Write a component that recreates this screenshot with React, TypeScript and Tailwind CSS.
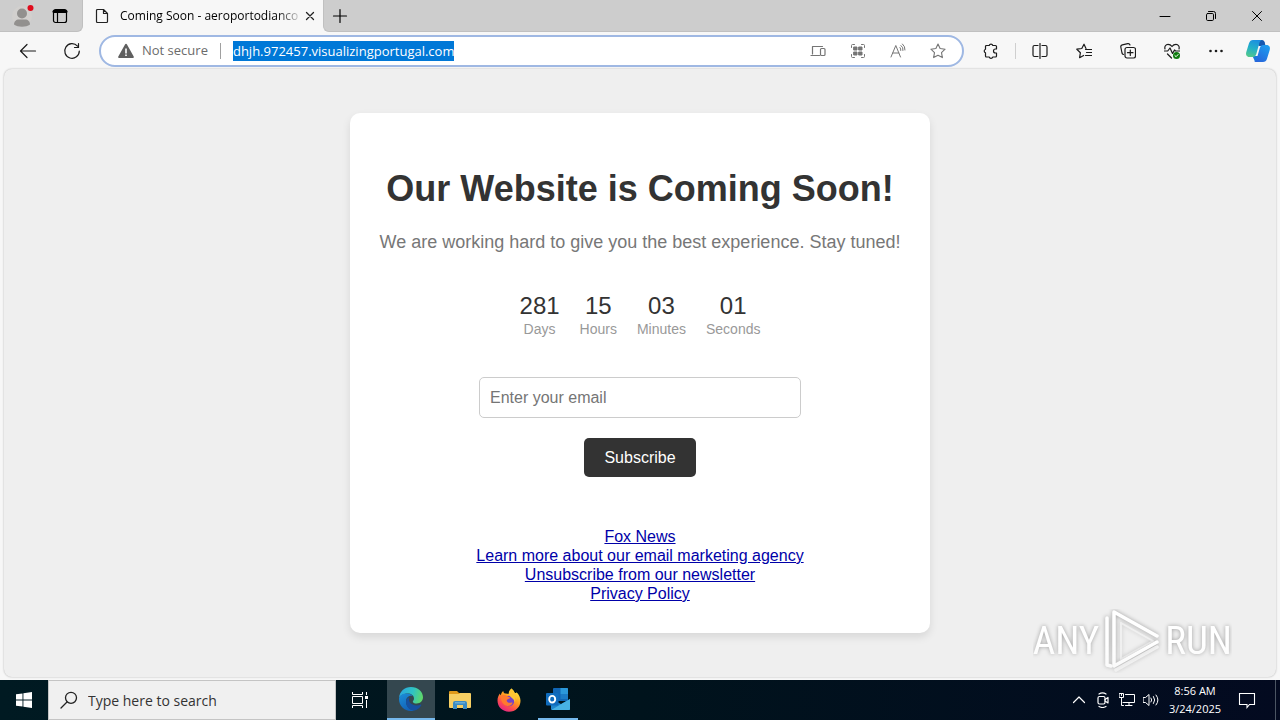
import type { ReactNode } from "react";

type IconProps = { size?: number; className?: string; children: ReactNode };

function Line({ size = 16, className = "", children }: IconProps) {
  return (
    <svg
      aria-hidden="true"
      width={size}
      height={size}
      viewBox={`0 0 ${size} ${size}`}
      fill="none"
      stroke="currentColor"
      strokeLinecap="round"
      strokeLinejoin="round"
      className={`shrink-0 ${className}`}
    >
      {children}
    </svg>
  );
}

function IconButton({ label, className, children }: { label: string; className: string; children: ReactNode }) {
  return (
    <button type="button" aria-label={label} className={`flex shrink-0 items-center justify-center ${className}`}>
      {children}
    </button>
  );
}

function TitleBar() {
  return (
    <div className="flex h-8 shrink-0 bg-[#f7f7f7]">
      <div className="flex w-[83px] shrink-0 items-center rounded-br-md border-r border-b border-[#c0c0c0] bg-[#cdcdcd]">
        <IconButton label="Profile" className="h-full w-11">
          <svg aria-hidden="true" width="24" height="24" viewBox="0 0 24 24">
            <circle cx="12" cy="12" r="10" fill="#d2d0ce" />
            <circle cx="12" cy="9.500" r="5" fill="#92908e" />
            <path d="M4 20.500c0-3 2-5 5-5h6c3 0 5 2 5 5-2 1.500-5 2.200-8 2.200s-6-.7-8-2.200z" fill="#92908e" />
            <circle cx="20.500" cy="4" r="3" fill="#e00b1c" />
          </svg>
        </IconButton>
        <IconButton label="Workspaces" className="h-full w-8 text-black">
          <Line>
            <rect x="1.500" y="1.500" width="13" height="13" rx="2" strokeWidth="1.200" />
            <path d="M2 3.500h12" strokeWidth="3" />
            <path d="M5.500 4v10" strokeWidth="1.200" />
          </Line>
        </IconButton>
      </div>
      <div className="flex w-60 shrink-0 items-center pl-[11px]">
        <Line className="text-[#222]">
          <path d="M2.500 2.500a1 1 0 0 1 1-1h6l4 4v8a1 1 0 0 1-1 1h-9a1 1 0 0 1-1-1zM9.500 1.500v4h4" strokeWidth="1.200" />
        </Line>
        <span className="ml-2.5 shrink-0 text-xs whitespace-nowrap text-black [mask-image:linear-gradient(to_right,black_88%,rgba(0,0,0,0.2))]">
          Coming Soon - aeroportodianco
        </span>
        <IconButton label="Close tab" className="mr-1 ml-auto h-6 w-6 text-[#222]">
          <Line size={10}>
            <path d="M1.500 1.500l7 7M8.500 1.500l-7 7" strokeWidth="1.300" />
          </Line>
        </IconButton>
      </div>
      <div className="flex flex-1 rounded-bl-md border-b border-l border-[#c0c0c0] bg-[#cdcdcd] text-black">
        <IconButton label="New tab" className="h-full w-8">
          <Line>
            <path d="M8 1.500v13M1.500 8h13" strokeWidth="1.200" />
          </Line>
        </IconButton>
        <div className="ml-auto flex">
          <IconButton label="Minimize" className="w-[46px]">
            <Line size={12}>
              <path d="M1 6.500h10" />
            </Line>
          </IconButton>
          <IconButton label="Restore" className="w-[46px]">
            <Line size={12}>
              <rect x="1.500" y="3.500" width="7" height="7" rx="1.200" />
              <path d="M3.500 1.500h5a2 2 0 0 1 2 2v5" />
            </Line>
          </IconButton>
          <IconButton label="Close" className="w-[46px]">
            <Line size={12}>
              <path d="M1.500 1.500l9 9M10.500 1.500l-9 9" />
            </Line>
          </IconButton>
        </div>
      </div>
    </div>
  );
}

function CopilotLogo() {
  return (
    <svg aria-hidden="true" width="26" height="26" viewBox="0 0 26 26">
      <defs>
        <linearGradient id="copilotLeft" x1="0.600" y1="0" x2="0.300" y2="1">
          <stop offset="0" stopColor="#1b8fe0" />
          <stop offset="0.500" stopColor="#22b0c8" />
          <stop offset="1" stopColor="#52c88c" />
        </linearGradient>
        <linearGradient id="copilotRight" x1="0.800" y1="0" x2="0.200" y2="1">
          <stop offset="0" stopColor="#1c9df0" />
          <stop offset="1" stopColor="#2864da" />
        </linearGradient>
      </defs>
      <path d="M13 2h4c1.500 0 2.300 1 2.700 2.300L20.500 8h-7z" fill="#1558b0" />
      <path d="M7.500 18h6l-1.500 6h-.5c-1.300 0-2-1-2.200-2z" fill="#1a78dc" />
      <path d="M8 2h9c-1.500.5-2.200 1.700-2.700 3.300L11.300 16c-.6 2-1.700 3-3.500 3H4.500C1.500 19 .5 16.500 1.300 14L4 5.300C4.700 3.200 6 2 8 2z" fill="url(#copilotLeft)" />
      <path d="M18 24H9c1.500-.5 2.200-1.700 2.700-3.300L14.800 10c.6-2 1.700-3 3.500-3h3.200c3 0 4 2.500 3.200 5L22 20.700c-.7 2.100-2 3.300-4 3.300z" fill="url(#copilotRight)" />
    </svg>
  );
}

function Toolbar() {
  return (
    <div className="flex h-[37px] shrink-0 items-center bg-[#f7f7f7] pl-1.5 text-[#1b1b1b]">
      <IconButton label="Back" className="h-8 w-11">
        <Line size={18}>
          <path d="M1.500 9h15M8 2.500L1.500 9 8 15.500" strokeWidth="1.200" />
        </Line>
      </IconButton>
      <IconButton label="Refresh" className="h-8 w-11">
        <Line size={18}>
          <path d="M14.500 4.200A7.300 7.300 0 1 0 16.300 9M15.500 1.500v4h-4" strokeWidth="1.200" />
        </Line>
      </IconButton>
      <div className="ml-[5px] flex h-8 min-w-0 flex-1 items-center rounded-full border-2 border-[#9fb8e3] bg-white pr-1 pl-[17px] text-[13px] text-[#6b6b6b]">
        <svg aria-hidden="true" width="16" height="16" viewBox="0 0 16 16" className="shrink-0">
          <path d="M7 1.400c.4-.8 1.600-.8 2 0l6.700 12c.4.800-.1 1.600-1 1.600H1.300c-.9 0-1.400-.8-1-1.600z" fill="#5f5f5f" />
          <path d="M7.200 5.500h1.600v5H7.200zM7.200 11.500h1.600v1.600H7.200z" fill="#fff" />
        </svg>
        <span className="ml-2 shrink-0">Not secure</span>
        <span className="mx-3 h-4 w-px shrink-0 bg-[#a0a0a0]" />
        <input
          aria-label="Address"
          readOnly
          value="dhjh.972457.visualizingportugal.com"
          className="h-5 [field-sizing:content] bg-[#0078d7] text-[13px] text-white outline-none"
        />
        <div className="ml-auto flex text-[#757575]">
          <IconButton label="Send to devices" className="h-7 w-10">
            <Line>
              <path d="M2.500 11V3.500h10M1 12.500h8.500" strokeWidth="1.200" />
              <rect x="10.500" y="5.500" width="4.500" height="7" rx="1" strokeWidth="1.200" />
            </Line>
          </IconButton>
          <IconButton label="QR code" className="h-7 w-10">
            <Line>
              <path d="M1.500 4.500v-2a1 1 0 0 1 1-1h2M11.500 1.500h2a1 1 0 0 1 1 1v2M14.500 11.500v2a1 1 0 0 1-1 1h-2M4.500 14.500h-2a1 1 0 0 1-1-1v-2" />
              <path d="M4 4h3v3H4zM9 4h3v3H9zM4 9h3v3H4zM9 9h3v3H9z" fill="currentColor" />
            </Line>
          </IconButton>
          <IconButton label="Read aloud" className="h-7 w-10">
            <Line>
              <path d="M1 14L5.800 2.500 10.500 14M2.800 10h6M10 4.500a4 4 0 0 1 .8 3M11 2.500a5 5 0 0 1 2 5M12.500 1a7 7 0 0 1 2.500 6" />
            </Line>
          </IconButton>
          <IconButton label="Add to favorites" className="h-7 w-10">
            <Line>
              <path d="M8 1l2.100 4.500 5 .7-3.600 3.400.9 5L8 12.200l-4.400 2.400.9-5L.9 6.200l5-.7z" strokeWidth="1.100" />
            </Line>
          </IconButton>
        </div>
      </div>
      <IconButton label="Extensions" className="ml-[5px] h-8 w-11">
        <Line>
          <path d="M3.500 2.500h2.700a1.900 1.900 0 0 1 3.600 0h2.700a1 1 0 0 1 1 1V6h-1a2 2 0 0 0 0 4h1v3a1 1 0 0 1-1 1H9.800a1.900 1.900 0 0 1-3.600 0H3.500a1 1 0 0 1-1-1v-3.200a1.900 1.900 0 0 1 0-3.600V3.500a1 1 0 0 1 1-1z" strokeWidth="1.200" />
        </Line>
      </IconButton>
      <span className="mx-0.5 h-4 w-px shrink-0 bg-[#cfcfcf]" />
      <IconButton label="Split screen" className="h-8 w-11">
        <Line>
          <path d="M6 2.500H2.500a1.500 1.500 0 0 0-1.500 1.500v8a1.500 1.500 0 0 0 1.500 1.500H6M10 2.500h3.500A1.500 1.500 0 0 1 15 4v8a1.500 1.500 0 0 1-1.500 1.500H10M8 .5v15" strokeWidth="1.200" />
        </Line>
      </IconButton>
      <IconButton label="Favorites" className="h-8 w-11">
        <Line>
          <path d="M10 5.500L8 1.200 5.800 5.500.8 6.200l3.600 3.500-.8 5 4-2.200M9.500 6.500h6M10.500 9.500h5M9.500 12.500h6" strokeWidth="1.200" />
        </Line>
      </IconButton>
      <IconButton label="Collections" className="h-8 w-11">
        <Line>
          <path d="M3.500 11.500A2 2 0 0 1 2 10L.8 4A2 2 0 0 1 2.300 1.800l5.500-1.100A2 2 0 0 1 10 2" strokeWidth="1.200" />
          <rect x="5" y="4.500" width="10.500" height="10.500" rx="2" strokeWidth="1.200" />
          <path d="M10.300 7v5.500M7.500 9.700H13" strokeWidth="1.200" />
        </Line>
      </IconButton>
      <IconButton label="Browser essentials" className="h-8 w-11">
        <Line>
          <path d="M1 6C.3 3.500 1.800 1.300 4 1.300c1.700 0 3 .8 4 2.200 1-1.400 2.300-2.200 4-2.200 2.200 0 3.700 2.200 3 4.700M.5 8h3.200L6 5l2.500 5.500L10.500 7l1 1h4M3.500 11L7.500 15" strokeWidth="1.200" />
          <circle cx="12.500" cy="12.500" r="3.500" fill="#0f7b0f" stroke="none" />
          <path d="M10.900 12.600l1.200 1.100 2-2.200" stroke="#fff" />
        </Line>
      </IconButton>
      <IconButton label="Settings and more" className="h-8 w-11">
        <Line>
          <g fill="currentColor" stroke="none">
            <circle cx="2.500" cy="8" r="1.300" />
            <circle cx="8" cy="8" r="1.300" />
            <circle cx="13.500" cy="8" r="1.300" />
          </g>
        </Line>
      </IconButton>
      <IconButton label="Copilot" className="h-8 w-[42px] pr-0.5">
        <CopilotLogo />
      </IconButton>
    </div>
  );
}

const countdown = [
  { value: "281", label: "Days" },
  { value: "15", label: "Hours" },
  { value: "03", label: "Minutes" },
  { value: "01", label: "Seconds" },
];

const links = ["Fox News", "Learn more about our email marketing agency", "Unsubscribe from our newsletter", "Privacy Policy"];

function Watermark() {
  return (
    <div
      aria-hidden="true"
      className="absolute right-11 bottom-1 flex items-center gap-1 font-['Liberation_Sans_Narrow','Roboto_Condensed','Open_Sans_Condensed','Liberation_Sans',sans-serif] text-[39px] leading-none text-white drop-shadow-[0_0_2px_rgba(0,0,0,0.35)] [mask-image:linear-gradient(to_bottom,black_50%,rgba(0,0,0,0.6))]"
    >
      <span>ANY</span>
      <svg width="58" height="64" viewBox="0 0 58 64" fill="none" stroke="currentColor" strokeWidth="3.500" strokeLinejoin="round" strokeLinecap="round">
        <path d="M4 9v47l4 1" />
        <path d="M54 27L11 3v54l43-24" />
        <path d="M18 14v36l32-18L18 14" opacity="0.500" strokeWidth="2" />
        <path d="M13 61l41-23" opacity="0.700" />
      </svg>
      <span>RUN</span>
    </div>
  );
}

function Page() {
  return (
    <main className="relative mx-1 mb-[3px] flex flex-1 items-center justify-center rounded-lg bg-[#efefef] font-['Liberation_Sans',Arial,sans-serif] shadow-[0_0_2px_rgba(0,0,0,0.3)]">
      <section className="rounded-[10px] bg-white p-[30px] text-center shadow-[0_4px_8px_rgba(0,0,0,0.1)]">
        <h1 className="mt-[25px] text-4xl leading-[41px] font-bold text-[#333]">Our Website is Coming Soon!</h1>
        <p className="mt-[23px] text-lg leading-5 text-[#777]">We are working hard to give you the best experience. Stay tuned!</p>
        <div className="mt-10 flex justify-center gap-5">
          {countdown.map((part) => (
            <div key={part.label}>
              <div className="text-2xl leading-7 text-[#333]">{part.value}</div>
              <div className="mt-px text-sm leading-4 text-[#999]">{part.label}</div>
            </div>
          ))}
        </div>
        <form className="mt-10 flex flex-col items-center gap-5">
          <input
            type="email"
            aria-label="Email"
            placeholder="Enter your email"
            className="h-[41px] w-[322px] rounded-[5px] border border-[#ccc] px-2.5 text-base placeholder:text-[#757575]"
          />
          <button type="button" className="h-[39px] rounded-[5px] bg-[#333] px-5 text-base text-white">
            Subscribe
          </button>
        </form>
        <nav className="mt-[50px] flex flex-col items-center text-base leading-[19px]">
          {links.map((text) => (
            <a key={text} href="#" className="text-[#0000a8] underline">
              {text}
            </a>
          ))}
        </nav>
      </section>
      <Watermark />
    </main>
  );
}

function EdgeLogo() {
  return (
    <svg aria-hidden="true" width="26" height="26" viewBox="0 0 26 26">
      <defs>
        <linearGradient id="edgeTop" x1="0" y1="0.300" x2="1" y2="0.500">
          <stop offset="0" stopColor="#2aa5e0" />
          <stop offset="0.550" stopColor="#2fc3c4" />
          <stop offset="1" stopColor="#5fd868" />
        </linearGradient>
        <linearGradient id="edgeBody" x1="0" y1="0" x2="0.500" y2="1">
          <stop offset="0" stopColor="#1c8fd8" />
          <stop offset="1" stopColor="#1262b8" />
        </linearGradient>
      </defs>
      <path d="M1 12C1.500 5.500 6.500 1 13 1c6.800 0 12 4.700 12 10.300 0 3.700-2.800 6.200-6.200 6.200-2.600 0-4-1-4-1.800 0-.7 1.200-1.200 1.200-3.200C16 9.500 13.200 7.500 9.700 7.500 5 7.500 1.600 10 1 12z" fill="url(#edgeTop)" />
      <path d="M1 13c0-3.500 3.700-5.500 7.700-5.500 3 0 5 1 6.200 2.500-4.500-.8-6.900 2-6.900 5.500 0 5 4.500 9 8.500 9-1.200.4-2.500.5-3.500.5C6.200 25 1 19.800 1 13z" fill="url(#edgeBody)" />
      <path d="M11.200 11.200C8.700 12.300 8 14 8 16c0 5 4.200 8.800 8.700 8.400 2.800-.8 5.300-2.700 6.600-5.200.3-.5-.1-.8-.6-.6-1.200.6-2.500.8-3.900.8-5.200 0-9-3.400-7.600-8.200z" fill="#1650a0" />
    </svg>
  );
}

function ExplorerLogo() {
  return (
    <svg aria-hidden="true" width="24" height="24" viewBox="0 0 24 24">
      <path d="M1 4a1 1 0 0 1 1-1h7l2 2h11v4H1z" fill="#e09a1b" />
      <path d="M1 6h10l1-1h10a1 1 0 0 1 1 1v13a1 1 0 0 1-1 1H2a1 1 0 0 1-1-1z" fill="#f7cf63" />
      <path d="M5 21v-6a2 2 0 0 1 2-2h10a2 2 0 0 1 2 2v6h-4v-4H9v4z" fill="#3b8cc4" />
      <path d="M7 14h10v1.500H7z" fill="#68acd6" />
    </svg>
  );
}

function FirefoxLogo() {
  return (
    <svg aria-hidden="true" width="24" height="24" viewBox="0 0 24 24">
      <defs>
        <linearGradient id="foxBody" x1="0.800" y1="0.100" x2="0.250" y2="1">
          <stop offset="0" stopColor="#ffe53b" />
          <stop offset="0.400" stopColor="#ff9a1f" />
          <stop offset="0.700" stopColor="#ff4d4d" />
          <stop offset="1" stopColor="#e0218a" />
        </linearGradient>
      </defs>
      <path d="M14.500.5c2 1.500 3 3 3.200 4.500 1 .3 1.500-.1 1.800-.8 2.500 2.300 4 5.300 4 8.500C23.500 19 18.500 23.700 12 23.700S.5 19 .5 12.500c0-3 1.200-5.500 2.500-7 .1 1 .4 1.500.8 1.800C4.200 5.500 5 4 6.300 3c0 1.200.6 2 1.500 2.600 1.500-.2 2.700 0 3.700.5C11.700 4 12.700 2 14.500.5z" fill="url(#foxBody)" />
      <circle cx="12" cy="13" r="5.300" fill="#7542c8" />
      <path d="M4 8c2.500-1.700 5-1.300 7 .8l2.300.7c-.4 1.300-1.900 1.500-3 2-1 .7-.7 2.300.8 3 1.600.7 3.400-.5 4.500.2-.7 2.500-3.500 4-6.300 3C5.500 16.400 3.500 12 4 8z" fill="#ff7a2e" />
      <path d="M14.500.5c2 3.800 6.200 5.500 5.500 11.500-.5-1.500-1.200-2.200-2-2.500.8 2 .4 3.700-.3 5 .1-4.500-6.200-5-5.700-9.500.2-1.800 1.200-3.300 2.500-4.500z" fill="#ffc533" />
    </svg>
  );
}

function OutlookLogo() {
  return (
    <svg aria-hidden="true" width="26" height="24" viewBox="0 0 26 24">
      <path d="M8 2a1 1 0 0 1 1-1h13a1 1 0 0 1 1 1v12H8z" fill="#1066b5" />
      <path d="M15.500 1H22a1 1 0 0 1 1 1v5h-7.500z" fill="#2b98da" />
      <path d="M15.500 7H23v5h-7.500z" fill="#1b7bc6" />
      <path d="M6 12l10 5 9-5v10a1 1 0 0 1-1 1H7a1 1 0 0 1-1-1z" fill="#1f86cc" />
      <path d="M7 22.500L25 12v10a1 1 0 0 1-1 1H7z" fill="#48b2e4" />
      <rect x="1" y="6" width="12.500" height="12.500" rx="1" fill="#0f6cbd" />
      <ellipse cx="7.200" cy="12.200" rx="3" ry="3.300" fill="none" stroke="#fff" strokeWidth="1.900" />
    </svg>
  );
}

function Taskbar() {
  return (
    <footer className="flex h-10 shrink-0 bg-linear-to-r from-[#001a22] via-[#00131c] to-[#030a20] text-white">
      <IconButton label="Start" className="w-12">
        <svg aria-hidden="true" width="16" height="16" viewBox="0 0 16 16" fill="#fff">
          <path d="M0 2.300L6.500 1.400v6.100H0zM7.400 1.300L16 0v7.500H7.400zM0 8.400h6.500v6.200L0 13.700zM7.400 8.400H16V16l-8.600-1.200z" />
        </svg>
      </IconButton>
      <label className="flex w-72 shrink-0 items-center border border-[#c4c4c4] bg-[#f0f0f0] pl-[11px] text-[#222]">
        <Line size={18}>
          <circle cx="11" cy="6.800" r="5.500" strokeWidth="1.300" />
          <path d="M7 11L1 17" strokeWidth="1.300" />
        </Line>
        <input
          aria-label="Search"
          placeholder="Type here to search"
          className="ml-2.5 min-w-0 flex-1 bg-transparent text-[14px] text-[#222] outline-none placeholder:text-[#333]"
        />
      </label>
      <div className="flex gap-px">
        <IconButton label="Task view" className="mr-0.5 w-12">
          <svg aria-hidden="true" width="18" height="18" viewBox="0 0 18 18" fill="none" stroke="#fff">
            <path d="M1.500 1v2.500h10V1M1.500 17v-2.500h10V17M1.500 5.500h10v7h-10zM15.500 1v3M15.500 9v8" />
            <path d="M14 5h3v3h-3z" fill="#fff" stroke="none" />
          </svg>
        </IconButton>
        <IconButton label="Microsoft Edge" className="w-12 border-b-2 border-[#76b9ed] bg-[#34474f]">
          <EdgeLogo />
        </IconButton>
        <IconButton label="File Explorer" className="w-12">
          <ExplorerLogo />
        </IconButton>
        <IconButton label="Firefox" className="w-12">
          <FirefoxLogo />
        </IconButton>
        <IconButton label="Outlook" className="mx-1 w-10 border-b-2 border-[#76b9ed]">
          <OutlookLogo />
        </IconButton>
      </div>
      <div className="ml-auto flex">
        <IconButton label="Show hidden icons" className="w-6">
          <Line>
            <path d="M2.500 10.500L8 5l5.500 5.500" strokeWidth="1.200" />
          </Line>
        </IconButton>
        <IconButton label="Meet now" className="w-6">
          <Line>
            <rect x="3" y="4.500" width="7" height="7.500" rx="1.500" strokeWidth="1.200" />
            <path d="M10 7.500l3-2v5.500l-3-2M4 2Q7.500-.2 11 2M4 14.500q3.500 2 7 0" strokeWidth="1.200" />
          </Line>
        </IconButton>
        <IconButton label="Network" className="w-6">
          <Line>
            <path d="M6.500 2.500h9v8H4M10 10.500v3M6.500 13.500h6.500M2.500 5.500v8h2" />
            <path d="M.5 1.500h4v4h-4zM2.500 1.500v2" />
          </Line>
        </IconButton>
        <IconButton label="Volume" className="w-6">
          <Line>
            <path d="M.5 5.500h2L6 2.500v11l-3.500-3h-2zM8 6q1.500 2 0 4M10.500 4.500q2.500 3.500 0 7M13 3q4 5 0 10" />
          </Line>
        </IconButton>
        <div className="flex w-16 flex-col items-center justify-center text-[11px] leading-[18px] whitespace-nowrap">
          <span>8:56 AM</span>
          <span>3/24/2025</span>
        </div>
        <IconButton label="Notifications" className="w-10">
          <Line size={18}>
            <path d="M1.500 2.500h15v11h-5l-2.500 3v-3h-7.500z" strokeWidth="1.100" strokeLinejoin="miter" />
          </Line>
        </IconButton>
        <div className="ml-2 w-[5px] border-l border-[#4b5563]" />
      </div>
    </footer>
  );
}

export default function App() {
  return (
    <div className="flex min-h-screen flex-col bg-[#f7f7f7] font-['Open_Sans','Noto_Sans',sans-serif]">
      <TitleBar />
      <Toolbar />
      <Page />
      <Taskbar />
    </div>
  );
}
